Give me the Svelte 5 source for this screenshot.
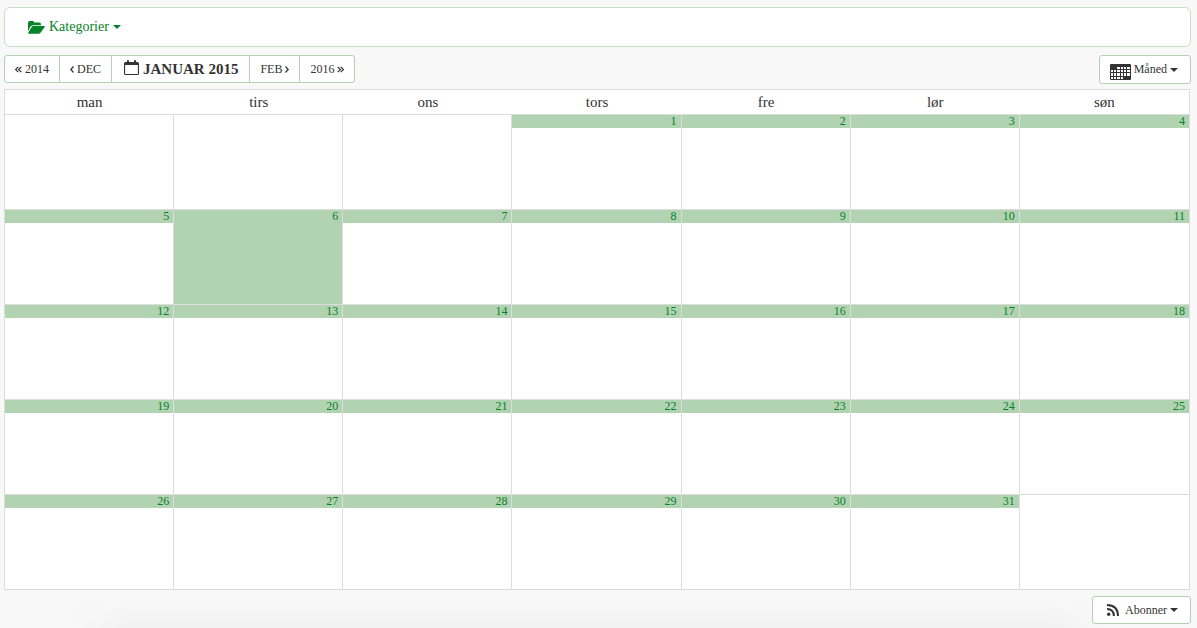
<script>
  const weekdays = ['man', 'tirs', 'ons', 'tors', 'fre', 'lør', 'søn'];
  const offset = 3;
  const daysInMonth = 31;
  const today = 6;
  const weeks = Array.from({ length: 5 }, (_, w) =>
    Array.from({ length: 7 }, (_, d) => {
      const day = w * 7 + d + 1 - offset;
      return day > 0 && day <= daysInMonth ? day : null;
    })
  );
</script>

{#snippet caret()}
  <svg class="caret" width="8" height="4" viewBox="0 0 8 4" aria-hidden="true"><path d="M0 0h8L4 4z" /></svg>
{/snippet}

{#snippet chevron(d, w)}
  <svg class="chevron" width={w} height="7" viewBox="0 0 {w} 7" aria-hidden="true"><path {d} /></svg>
{/snippet}

<div class="page">
  <header class="filters">
    <button class="category" type="button">
      <svg width="17" height="13" viewBox="0 0 17 13" aria-hidden="true">
        <path d="M0 10.2V1.7Q0 0 1.7 0h3Q6.2 0 6.2 1.5h5.2q1.5 0 1.5 1.5v1.2H5.4q-1.8 0-2.9 1.3z" />
        <path d="M5.3 5.1h10.9q1.2 0 .5 1l-4 5.3q-1 1.3-2.5 1.3H.8q-1.2 0-.4-1.1l3.1-5.3q.7-1.2 1.8-1.2z" />
      </svg>
      <span>Kategorier</span>
      {@render caret()}
    </button>
  </header>

  <nav class="toolbar">
    <div class="pager">
      <button type="button">{@render chevron('M3.3.8.6 3.5l2.7 2.7M6.3.8 3.6 3.5l2.7 2.7', 7)}2014</button>
      <button type="button">{@render chevron('M3.5.5.8 3.5l2.7 3', 4)}DEC</button>
      <button type="button" class="current">
        <svg width="15" height="16" viewBox="0 0 15 16" aria-hidden="true">
          <path
            fill-rule="evenodd"
            d="M1.5 2H3V1q0-1 1-1t1 1v1h5V1q0-1 1-1t1 1v1h1.5Q15 2 15 3.5v10q0 1.500-1.500 1.500h-12Q0 15 0 13.500v-10Q0 2 1.500 2zM1.100 5v8.900h12.800V5z"
          />
        </svg>
        <span>JANUAR 2015</span>
      </button>
      <button type="button">FEB{@render chevron('M.5.5l2.700 3-2.700 3', 4)}</button>
      <button type="button">2016{@render chevron('M.7.8l2.700 2.700L.7 6.200M3.700.8l2.700 2.700-2.700 2.700', 7)}</button>
    </div>
    <button class="menu" type="button">
      <svg class="grid-icon" width="21" height="16" viewBox="0 0 21 16" aria-hidden="true">
        <rect width="21" height="16" rx="1" />
        <path
          class="cells"
          d="M7 3h3v2H7zM11 3h2v2h-2zM14 3h2v2h-2zM17 3h3v2h-3zM1 6h2v2H1zM4 6h2v2H4zM7 6h3v2H7zM11 6h2v2h-2zM14 6h2v2h-2zM17 6h3v2h-3zM1 9h2v3H1zM4 9h2v3H4zM7 9h3v3H7zM11 9h2v3h-2zM14 9h2v3h-2zM17 9h3v3h-3zM1 13h2v2H1zM4 13h2v2H4zM7 13h3v2H7zM11 13h2v2h-2z"
        />
      </svg>
      <span>Måned</span>
      {@render caret()}
    </button>
  </nav>

  <table>
    <thead>
      <tr>{#each weekdays as name}<th scope="col">{name}</th>{/each}</tr>
    </thead>
    <tbody>
      {#each weeks as week}
        <tr>
          {#each week as day}
            <td class:today={day === today}>{#if day}<div class="day">{day}</div>{/if}</td>
          {/each}
        </tr>
      {/each}
    </tbody>
  </table>

  <footer>
    <button class="menu subscribe" type="button">
      <svg width="12" height="12" viewBox="0 0 12 12" aria-hidden="true">
        <circle cx="1.700" cy="10.300" r="1.700" />
        <path class="wave" d="M0 5.100Q6.800 5.400 6.900 12M0 1Q10.800 1.200 11 12" />
      </svg>
      <span>Abonner</span>
      {@render caret()}
    </button>
  </footer>
</div>

<style>
  :global(body) {
    background: #f8f8f8;
  }
  .page {
    box-sizing: border-box;
    min-height: 100vh;
    padding: 7px 6px 4px 4px;
    font-family: 'Liberation Serif', serif;
    color: #333;
    background:
      linear-gradient(to right, #f8f8f8 70px, #f8f8f800 130px calc(100% - 150px), #f8f8f8 calc(100% - 90px)),
      linear-gradient(to top, #f1f1f1, #f8f8f8 28px);
  }
  button {
    display: flex;
    align-items: center;
    box-sizing: border-box;
    margin: 0;
    font: inherit;
    color: inherit;
    cursor: pointer;
  }
  svg {
    flex: none;
    fill: currentColor;
  }
  .filters {
    display: flex;
    align-items: center;
    box-sizing: border-box;
    height: 40px;
    padding: 0 23px;
    background: #fff;
    border: 1px solid #c5dfc5;
    border-radius: 6px;
  }
  .category {
    gap: 4px;
    padding: 0;
    border: 0;
    background: none;
    color: #048227;
    font-size: 14px;
    line-height: 20px;
  }
  .toolbar {
    display: flex;
    justify-content: space-between;
    align-items: flex-start;
    height: 34px;
    padding-top: 8px;
  }
  .pager {
    display: flex;
    height: 28px;
    box-sizing: border-box;
    background: #fff;
    border: 1px solid #b2d3b2;
    border-radius: 3px;
  }
  .pager button {
    gap: 3px;
    padding: 0 10px;
    border: 0;
    background: none;
    font-size: 12px;
  }
  .pager button + button {
    border-left: 1px solid #b2d3b2;
  }
  .pager .current {
    gap: 4px;
    padding: 0 11px 0 12px;
    font-size: 15px;
    font-weight: bold;
  }
  .current svg {
    margin-top: -2px;
  }
  .chevron {
    fill: none;
    stroke: currentColor;
    stroke-width: 1.2;
  }
  .menu {
    gap: 3px;
    height: 29px;
    padding: 0 12px 0 10px;
    background: #fff;
    border: 1px solid #b2d3b2;
    border-radius: 3px;
    font-size: 12px;
  }
  .grid-icon {
    margin-top: 4px;
  }
  .cells {
    fill: #fff;
  }
  table {
    width: calc(100% - 1px);
    table-layout: fixed;
    border-collapse: separate;
    border-spacing: 0;
    border: 1px solid #ddd;
    border-bottom: 0;
    background: #fff;
  }
  th,
  td {
    padding: 0;
    border: 0 solid #ddd;
    border-bottom-width: 1px;
  }
  th {
    height: 24px;
    font-size: 15px;
    font-weight: normal;
    line-height: 24px;
  }
  td {
    height: 94px;
    border-right-width: 1px;
    vertical-align: top;
  }
  td:last-child {
    border-right-width: 0;
  }
  .day {
    height: 13px;
    padding-right: 4px;
    background: #b2d3b2;
    color: #048227;
    font-size: 12px;
    line-height: 13px;
    text-align: right;
  }
  .today {
    background: #b2d3b2;
  }
  footer {
    display: flex;
    justify-content: flex-end;
    padding-top: 6px;
  }
  .subscribe {
    height: 28px;
    padding-left: 14px;
  }
  .subscribe span {
    padding-left: 3px;
  }
  .wave {
    fill: none;
    stroke: currentColor;
    stroke-width: 2;
  }
</style>
